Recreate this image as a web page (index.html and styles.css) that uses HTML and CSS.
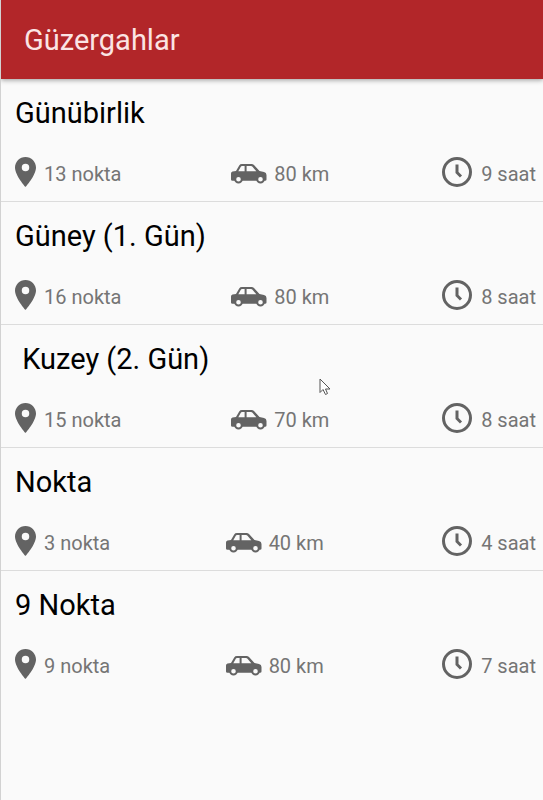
FILE: index.html
```html
<!DOCTYPE html>
<html lang="tr">
<head>
  <meta charset="UTF-8" />
  <meta name="viewport" content="width=device-width, initial-scale=1" />
  <title>Güzergahlar</title>
  <link rel="stylesheet" href="styles.css">
</head>
<body>
  <svg class="sprite" aria-hidden="true">
    <symbol id="pin" viewBox="5 2 14 20" preserveAspectRatio="none">
      <path d="M12 2C8.13 2 5 5.13 5 9c0 5.25 7 13 7 13s7-7.75 7-13c0-3.87-3.13-7-7-7zm0 9.5a2.5 2.5 0 0 1 0-5 2.5 2.5 0 0 1 0 5z"/>
    </symbol>
    <symbol id="car" viewBox="0 0 36 20">
      <path fill-rule="evenodd" d="M11 0H20.500Q22 0 23 1L28.500 7L33 8Q35.500 8.700 35.500 11V15.500Q35.500 16.800 34 16.800H1.500Q0 16.800 0 15.500V9.500Q0 8 1.500 7.500L5 7L8.200 1.400Q9 0 11 0zM11 2Q10.200 2 9.800 2.800L7.300 7.300H13.600V2zM15.600 2V7.300H25.300L21.500 2.800Q20.800 2 20 2z"/>
      <circle class="wheel" cx="7.500" cy="15.200" r="3.300"/>
      <circle class="wheel" cx="29.500" cy="15.200" r="3.300"/>
    </symbol>
    <symbol id="clock" viewBox="0 0 30 30">
      <circle class="line" cx="15" cy="15" r="13.500"/>
      <path class="line" d="M15 7.500V15.500L19 19.500"/>
    </symbol>
  </svg>

  <header class="appbar">
    <h1>Güzergahlar</h1>
  </header>

  <main>
    <ul class="routes">
      <li>
        <a class="route" href="#gunubirlik">
          <h2>Günübirlik</h2>
          <div class="meta">
            <span class="points"><svg aria-hidden="true"><use href="#pin"/></svg>13 nokta</span>
            <span class="distance"><svg aria-hidden="true"><use href="#car"/></svg>80 km</span>
            <span class="time"><svg aria-hidden="true"><use href="#clock"/></svg>9 saat</span>
          </div>
        </a>
      </li>
      <li>
        <a class="route" href="#guney">
          <h2>Güney (1. Gün)</h2>
          <div class="meta">
            <span class="points"><svg aria-hidden="true"><use href="#pin"/></svg>16 nokta</span>
            <span class="distance"><svg aria-hidden="true"><use href="#car"/></svg>80 km</span>
            <span class="time"><svg aria-hidden="true"><use href="#clock"/></svg>8 saat</span>
          </div>
        </a>
      </li>
      <li>
        <a class="route" href="#kuzey">
          <h2> Kuzey (2. Gün)</h2>
          <div class="meta">
            <span class="points"><svg aria-hidden="true"><use href="#pin"/></svg>15 nokta</span>
            <span class="distance"><svg aria-hidden="true"><use href="#car"/></svg>70 km</span>
            <span class="time"><svg aria-hidden="true"><use href="#clock"/></svg>8 saat</span>
          </div>
        </a>
      </li>
      <li>
        <a class="route" href="#nokta">
          <h2>Nokta</h2>
          <div class="meta">
            <span class="points"><svg aria-hidden="true"><use href="#pin"/></svg>3 nokta</span>
            <span class="distance"><svg aria-hidden="true"><use href="#car"/></svg>40 km</span>
            <span class="time"><svg aria-hidden="true"><use href="#clock"/></svg>4 saat</span>
          </div>
        </a>
      </li>
      <li>
        <a class="route" href="#dokuz-nokta">
          <h2>9 Nokta</h2>
          <div class="meta">
            <span class="points"><svg aria-hidden="true"><use href="#pin"/></svg>9 nokta</span>
            <span class="distance"><svg aria-hidden="true"><use href="#car"/></svg>80 km</span>
            <span class="time"><svg aria-hidden="true"><use href="#clock"/></svg>7 saat</span>
          </div>
        </a>
      </li>
    </ul>
  </main>

  <svg class="pointer" viewBox="0 0 12 18" aria-hidden="true">
    <path d="M1 1V14.500L4 11.500L6.500 16.500L8.500 15.500L6.500 11H11z"/>
  </svg>
</body>
</html>
```
FILE: styles.css
```css
*, *::before, *::after {
  box-sizing: border-box;
}
body {
  margin: 0;
  min-height: 100vh;
  font-family: Roboto, sans-serif;
  background: #fafafa;
  color: #000;
  border-left: 1px solid #d2d2d2;
}
h1, h2 {
  margin: 0;
  font-weight: 400;
}

.sprite {
  display: none;
}

.appbar {
  position: relative;
  padding: 20px 23px 19px;
  background: #b22629;
  box-shadow: 0 1px 5px rgba(0, 0, 0, 0.4);
}
.appbar h1 {
  font-size: 29px;
  line-height: 40px;
  color: #fbe4e4;
}

.routes {
  margin: 0;
  padding: 0;
  list-style: none;
}
.routes li + li {
  border-top: 1px solid #dcdcdc;
}
.route {
  display: block;
  padding: 14px 7px 10px 14px;
  color: inherit;
  text-decoration: none;
}
.route h2 {
  font-size: 29px;
  line-height: 40px;
  white-space: pre;
}

.meta {
  display: flex;
  justify-content: space-between;
  align-items: center;
  margin-top: 24px;
  font-size: 20px;
  line-height: 34px;
  color: #757575;
}
.meta span {
  display: flex;
  align-items: center;
}
.meta svg {
  fill: #636363;
}
.points svg {
  width: 21px;
  height: 30px;
  margin: 0 8px 4px 0;
}
.distance {
  padding-right: 3px;
}
.distance svg {
  width: 36px;
  height: 20px;
  margin-right: 7px;
}
.time svg {
  width: 30px;
  height: 30px;
  margin: 0 9px 4px 0;
}
.wheel {
  fill: #fafafa;
  stroke: #636363;
  stroke-width: 2;
}
.line {
  fill: none;
  stroke: #636363;
  stroke-width: 3;
}

/* mouse pointer over the list */
.pointer {
  position: absolute;
  top: 378px;
  left: 319px;
  width: 12px;
  height: 18px;
  fill: #fff;
  stroke: #555;
  pointer-events: none;
}
```
